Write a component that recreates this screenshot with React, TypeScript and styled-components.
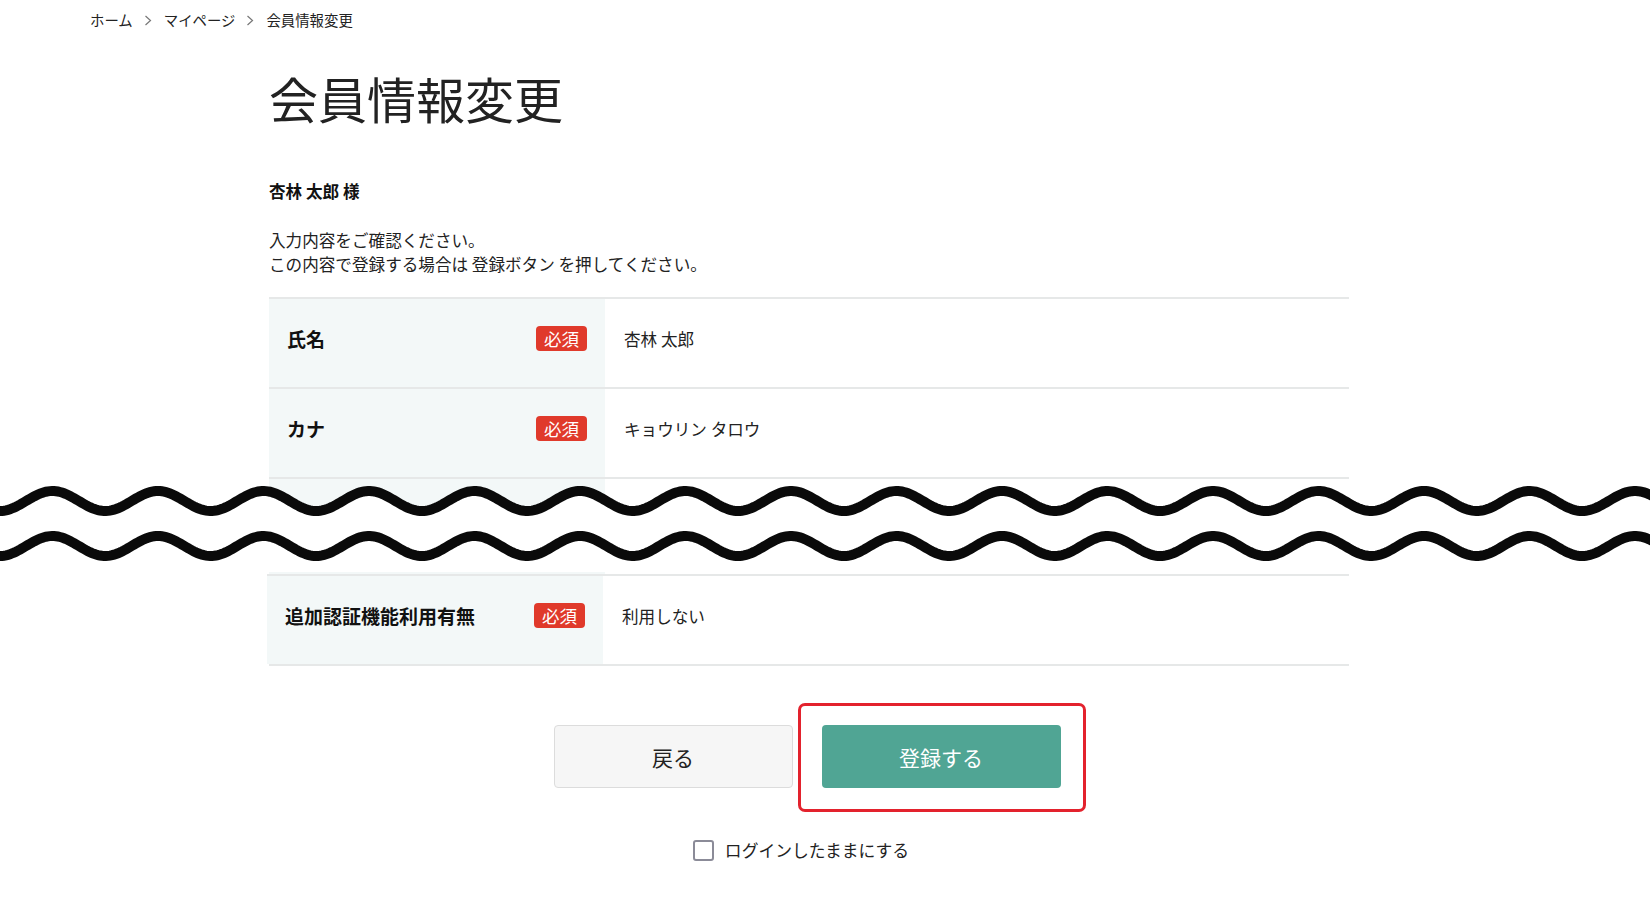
import React from "react";
import styled, { createGlobalStyle } from "styled-components";

const FONT = `"Noto Sans CJK JP", "Noto Sans", sans-serif`;

const GlobalStyle = createGlobalStyle`
  html, body {
    margin: 0;
    padding: 0;
    background: #fff;
  }
  body {
    font-family: ${FONT};
    color: #222;
  }
`;

interface Field {
  label: string;
  value: string;
}

const topFields: Field[] = [
  { label: "氏名", value: "杏林 太郎" },
  { label: "カナ", value: "キョウリン タロウ" },
];

const bottomFields: Field[] = [{ label: "追加認証機能利用有無", value: "利用しない" }];

// sine wave for the "cut" marks across the page
const wavePath = (cy: number, amp: number, width: number) => {
  const period = 105.5;
  const phase = 52.5;
  let d = "";
  for (let x = -20; x <= width + 20; x += 2) {
    const y = cy - amp * Math.cos((2 * Math.PI * (x - phase)) / period);
    d += `${x === -20 ? "M" : "L"}${x} ${y.toFixed(2)} `;
  }
  return d;
};

const Chevron = () => (
  <svg width="8" height="11" viewBox="0 0 8 11" fill="none">
    <path d="M1.5 1l5 4.5-5 4.5" stroke="#777" strokeWidth="1.2" />
  </svg>
);

const App: React.FC = () => {
  const W = 1650;
  const H = 95;
  const top = wavePath(24, 10, W);
  const bottom = wavePath(69, 10, W);

  return (
    <Page>
      <GlobalStyle />
      <Breadcrumb>
        <Crumb>ホーム</Crumb>
        <Chevron />
        <Crumb>マイページ</Crumb>
        <Chevron />
        <Crumb>会員情報変更</Crumb>
      </Breadcrumb>

      <Content>
        <Title>会員情報変更</Title>
        <UserName>杏林 太郎 様</UserName>
        <Lead>
          入力内容をご確認ください。
          <br />
          この内容で登録する場合は 登録ボタン を押してください。
        </Lead>

        <Table>
          {topFields.map((f) => (
            <Row key={f.label}>
              <LabelCell>
                <Label>{f.label}</Label>
                <Badge>必須</Badge>
              </LabelCell>
              <ValueCell>{f.value}</ValueCell>
            </Row>
          ))}
        </Table>
      </Content>

      <CutZone>
        <Content>
          <Row $height={95}>
            <LabelCell />
            <ValueCell />
          </Row>
        </Content>
        <WaveMark viewBox={`0 0 ${W} ${H}`} preserveAspectRatio="none">
          <path d={`${top} L${W + 20} ${H} L-20 ${H} Z`} fill="#fff" />
          <path d={top} fill="none" stroke="#0a0a0a" strokeWidth="10" />
          <path d={bottom} fill="none" stroke="#0a0a0a" strokeWidth="10" />
        </WaveMark>
      </CutZone>

      <Content>
        <Table $last>
          {bottomFields.map((f) => (
            <Row key={f.label} $shift={-2}>
              <LabelCell>
                <Label>{f.label}</Label>
                <Badge>必須</Badge>
              </LabelCell>
              <ValueCell>{f.value}</ValueCell>
            </Row>
          ))}
        </Table>

        <Actions>
          <BackButton type="button">戻る</BackButton>
          <Highlighted>
            <SubmitButton type="button">登録する</SubmitButton>
            <Frame />
          </Highlighted>
        </Actions>

        <KeepLogin>
          <CheckBox type="checkbox" />
          ログインしたままにする
        </KeepLogin>
      </Content>
    </Page>
  );
};

const Page = styled.div`
  width: 100%;
  min-height: 900px;
  padding-bottom: 40px;
  font-family: ${FONT};
`;

const Breadcrumb = styled.nav`
  display: flex;
  align-items: center;
  gap: 11px;
  padding: 10px 0 0 90px;
  height: 20px;
  font-size: 14.4px;
  line-height: 20px;
  color: #222;

  svg {
    margin-right: 1px;
  }
`;

const Crumb = styled.span`
  white-space: nowrap;
`;

const Content = styled.div`
  width: 1080px;
  margin-left: 269px;
`;

const Title = styled.h1`
  margin: 39px 0 0;
  font-size: 49px;
  line-height: 58px;
  font-weight: 400;
  color: #222;
`;

const UserName = styled.p`
  margin: 52px 0 0;
  font-size: 16.6px;
  line-height: 24px;
  font-weight: 700;
  color: #111;
`;

const Lead = styled.p`
  margin: 25px 0 0;
  font-size: 16.6px;
  line-height: 24px;
  color: #222;
`;

const Table = styled.div<{ $last?: boolean }>`
  margin-top: ${(p) => (p.$last ? "0" : "21px")};
  border-bottom: ${(p) => (p.$last ? "2px solid #e6e8e8" : "none")};
`;

const Row = styled.div<{ $height?: number; $shift?: number }>`
  display: flex;
  height: ${(p) => p.$height ?? 88}px;
  border-top: 2px solid #e6e8e8;
  margin-left: ${(p) => p.$shift ?? 0}px;
`;

const LabelCell = styled.div`
  width: 336px;
  flex-shrink: 0;
  box-sizing: border-box;
  display: flex;
  align-items: center;
  justify-content: space-between;
  padding: 0 18px 9px;
  background: #f3f8f8;
`;

const Label = styled.span`
  font-size: 19px;
  font-weight: 700;
  color: #111;
`;

const Badge = styled.span`
  display: inline-flex;
  align-items: center;
  justify-content: center;
  width: 51px;
  height: 25px;
  border-radius: 4px;
  background: #e03a2b;
  color: #fff;
  font-size: 17.5px;
  line-height: 1;
`;

const ValueCell = styled.div`
  flex: 1;
  display: flex;
  align-items: center;
  padding: 0 0 8px 19px;
  font-size: 16.6px;
  color: #222;
`;

const CutZone = styled.div`
  position: relative;
`;

const WaveMark = styled.svg`
  position: absolute;
  left: 0;
  top: 0;
  width: 100%;
  height: 95px;
`;

const Actions = styled.div`
  display: flex;
  justify-content: center;
  gap: 29px;
  margin-top: 59px;
  padding-right: 4px;
`;

const buttonBase = `
  width: 239px;
  height: 63px;
  border-radius: 4px;
  font-family: ${FONT};
  font-size: 21px;
  cursor: pointer;
`;

const BackButton = styled.button`
  ${buttonBase}
  background: #f6f6f6;
  border: 1px solid #dcdcdc;
  color: #222;
`;

const Highlighted = styled.div`
  position: relative;
`;

const SubmitButton = styled.button`
  ${buttonBase}
  background: #50a594;
  border: none;
  color: #fff;
`;

const Frame = styled.span`
  position: absolute;
  top: -22px;
  bottom: -24px;
  left: -24px;
  right: -25px;
  border: 3px solid #e3222d;
  border-radius: 7px;
  pointer-events: none;
`;

const KeepLogin = styled.label`
  display: flex;
  justify-content: center;
  align-items: center;
  gap: 11px;
  margin-top: 51px;
  padding-right: 16px;
  font-size: 16.8px;
  line-height: 22px;
  color: #222;
`;

const CheckBox = styled.input`
  appearance: none;
  margin: 0;
  width: 21px;
  height: 21px;
  box-sizing: border-box;
  border: 2px solid #8b8b98;
  border-radius: 3px;
  background: #fff;
`;

export default App;
